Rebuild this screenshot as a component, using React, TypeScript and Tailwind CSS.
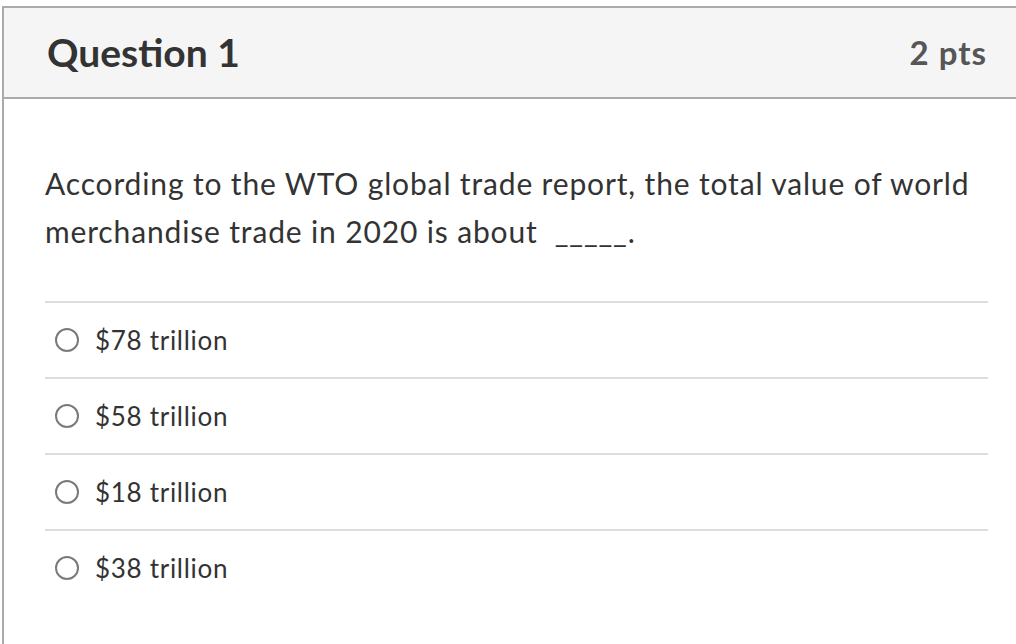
const options = ["$78 trillion", "$58 trillion", "$18 trillion", "$38 trillion"];

export default function App() {
  return (
    <div className="w-[1016px] h-[644px] overflow-hidden bg-white pt-[6px] pl-[2px] font-['Lato','Liberation_Sans',sans-serif]">
      <div className="border-t-2 border-l-2 border-[#aaaaaa] h-full">
        <div className="flex items-center justify-between h-[91px] bg-[#f5f5f5] border-b-2 border-[#aaaaaa] pl-[43px] pr-[29px]">
          <h2 className="text-[39px] font-bold text-[#333333]">Question 1</h2>
          <span className="text-[33px] font-bold text-[#565656] tracking-[1px]">2 pts</span>
        </div>
        <div className="pl-[41px] pr-[28px] pt-[60px]">
          <p className="text-[30px] leading-[48px] text-[#333333] tracking-[0.85px]">
            According to the WTO global trade report, the total value of world merchandise trade in 2020 is about&nbsp;&nbsp;_____.
          </p>
          <div className="mt-[46px]">
            {options.map((opt) => (
              <div key={opt} className="border-t-2 border-[#dddddd] h-[76px] flex items-center pl-[10px]">
                <span className="w-[24px] h-[24px] rounded-full border-2 border-[#7a7a7a] shrink-0" />
                <span className="ml-[16px] text-[26px] text-[#333333] tracking-[0.7px]">{opt}</span>
              </div>
            ))}
          </div>
        </div>
      </div>
    </div>
  );
}
